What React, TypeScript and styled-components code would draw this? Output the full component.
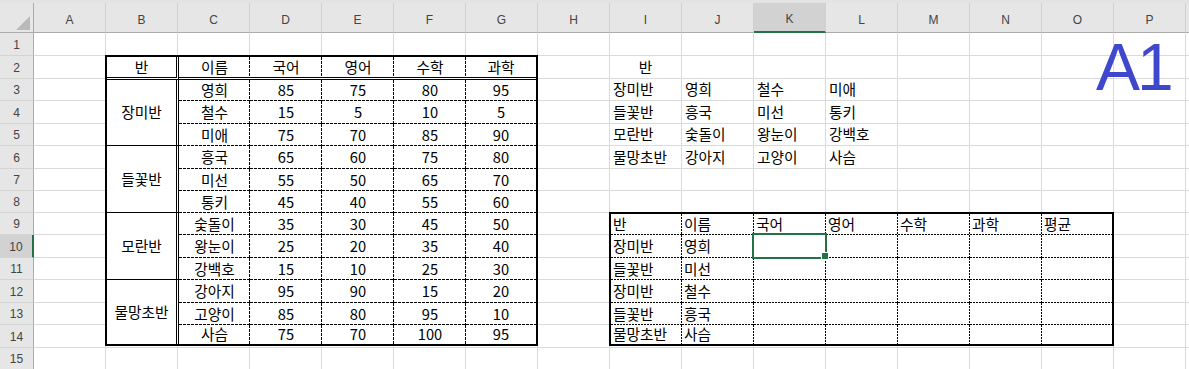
import styled, { createGlobalStyle } from "styled-components";

const GlobalStyle = createGlobalStyle`
  html, body {
    margin: 0;
    padding: 0;
    background: #fff;
  }
  body {
    overflow: hidden;
  }
  * {
    box-sizing: border-box;
  }
`;

const ROW_HEIGHTS = [23, 23, 22, 23, 22, 23, 22, 22, 22, 23, 22, 23, 22, 23, 22];
// Q only peeks in at the right edge, so its header stays blank
const COLUMNS = "ABCDEFGHIJKLMNOPQ".split("");
const VISIBLE_LETTERS = 16;
const ACTIVE_COL = "K";
const ACTIVE_ROW = 10;

const CELL_FONT = `"Noto Sans CJK KR", "Noto Sans", sans-serif`;
const HEAD_FONT = `"Liberation Sans", Arial, sans-serif`;

type Edge = "none" | "solid" | "double" | "dashed" | "dotted";
type Align = "left" | "center";

const DASH: Record<string, string> = {
  dashed: "#000 0 3px, transparent 3px 4px",
  dotted: "#000 0 2px, transparent 2px 3px",
};

function edgeBorder(side: "right" | "bottom", e: Edge) {
  if (e === "solid") return `border-${side}: 1px solid #000;`;
  if (e === "double") return `border-${side}: 3px double #000;`;
  return "";
}

function edgeBackground(r: Edge, b: Edge) {
  const layers: string[] = [];
  if (r === "dashed" || r === "dotted") {
    layers.push(`repeating-linear-gradient(to bottom, ${DASH[r]}) right top / 1px 100% no-repeat`);
  }
  if (b === "dashed" || b === "dotted") {
    layers.push(`repeating-linear-gradient(to right, ${DASH[b]}) left bottom / 100% 1px no-repeat`);
  }
  return layers.length ? `background: ${layers.join(", ")};` : "";
}

const Window = styled.div`
  position: relative;
  width: 1189px;
  height: 369px;
  overflow: hidden;
  background: #fff;
`;

const FormulaEdge = styled.div`
  height: 3px;
  background: #e3e3e3;
`;

const Sheet = styled.div`
  display: grid;
  grid-template-columns: 34px repeat(${COLUMNS.length}, 72px);
  grid-template-rows: 30px ${ROW_HEIGHTS.map((h) => `${h}px`).join(" ")};
  font-family: ${CELL_FONT};
`;

type Place = { $row: number; $col: number };

const Corner = styled.div`
  grid-area: 1 / 1;
  background: #e6e6e6;
  border-right: 1px solid #ababab;
  border-bottom: 1px solid #ababab;
  display: flex;
  align-items: flex-end;
  justify-content: flex-end;
  padding: 0 3px 2px 0;
`;

const ColHead = styled.div<{ $col: number; $active?: boolean }>`
  grid-area: 1 / ${(p) => p.$col};
  background: ${(p) => (p.$active ? "#d2d2d2" : "#e6e6e6")};
  border-right: 1px solid #d0d0d0;
  border-bottom: ${(p) => (p.$active ? "2px solid #217346" : "1px solid #ababab")};
  display: flex;
  align-items: center;
  justify-content: center;
  padding-top: 4px;
  font-family: ${HEAD_FONT};
  font-size: 12px;
  color: #444;
`;

const RowHead = styled.div<{ $row: number; $active?: boolean }>`
  grid-area: ${(p) => p.$row} / 1;
  background: ${(p) => (p.$active ? "#d2d2d2" : "#e6e6e6")};
  border-bottom: 1px solid #d4d4d4;
  border-right: ${(p) => (p.$active ? "2px solid #217346" : "1px solid #ababab")};
  display: flex;
  align-items: center;
  justify-content: center;
  padding-top: 1px;
  font-family: ${HEAD_FONT};
  font-size: 12px;
  color: #444;
`;

const Cell = styled.div<Place & { $align?: Align }>`
  grid-area: ${(p) => p.$row} / ${(p) => p.$col};
  border-right: 1px solid #dadada;
  border-bottom: 1px solid #dadada;
  display: flex;
  align-items: center;
  justify-content: ${(p) => (p.$align === "center" ? "center" : "flex-start")};
  padding-left: ${(p) => (p.$align === "center" ? "0" : "3px")};
  font-size: 14.7px;
  line-height: 1;
  color: #000;
  white-space: nowrap;
`;

const TableFrame = styled.div<{ $area: string; $cols: string; $rows: string }>`
  grid-area: ${(p) => p.$area};
  margin: -1px 0 2px -1px;
  border: 2px solid #000;
  background: #fff;
  display: grid;
  grid-template-columns: ${(p) => p.$cols};
  grid-template-rows: ${(p) => p.$rows};
  z-index: 1;
`;

const TCell = styled.div<{ $r: Edge; $b: Edge; $align?: Align; $span?: number }>`
  ${(p) => edgeBorder("right", p.$r)}
  ${(p) => edgeBorder("bottom", p.$b)}
  ${(p) => edgeBackground(p.$r, p.$b)}
  grid-row: span ${(p) => p.$span ?? 1};
  display: flex;
  align-items: center;
  justify-content: ${(p) => (p.$align === "left" ? "flex-start" : "center")};
  padding-left: ${(p) => (p.$align === "left" ? "2px" : "0")};
  font-size: 14.7px;
  line-height: 1;
  color: #000;
  white-space: nowrap;
`;

const Selection = styled.div`
  grid-area: ${ACTIVE_ROW + 1} / ${COLUMNS.indexOf(ACTIVE_COL) + 2};
  margin: -2px -1px -1px -2px;
  border: 2px solid #217346;
  position: relative;
  z-index: 2;

  &::after {
    content: "";
    position: absolute;
    right: -3px;
    bottom: -2px;
    width: 6px;
    height: 6px;
    background: #217346;
    outline: 1px solid #fff;
  }
`;

const BigLabel = styled.div`
  position: absolute;
  left: 1096px;
  top: 34px;
  font-family: ${HEAD_FONT};
  font-size: 66px;
  line-height: 1;
  letter-spacing: -3px;
  color: #3f48cc;
  z-index: 3;
`;

const SUBJECTS = ["국어", "영어", "수학", "과학"];

const GROUPS: { name: string; students: [string, number, number, number, number][] }[] = [
  { name: "장미반", students: [["영희", 85, 75, 80, 95], ["철수", 15, 5, 10, 5], ["미애", 75, 70, 85, 90]] },
  { name: "들꽃반", students: [["흥국", 65, 60, 75, 80], ["미선", 55, 50, 65, 70], ["통키", 45, 40, 55, 60]] },
  { name: "모란반", students: [["숯돌이", 35, 30, 45, 50], ["왕눈이", 25, 20, 35, 40], ["강백호", 15, 10, 25, 30]] },
  { name: "물망초반", students: [["강아지", 95, 90, 15, 20], ["고양이", 85, 80, 95, 10], ["사슴", 75, 70, 100, 95]] },
];

const LOOKUP_ROWS = [
  ["장미반", "영희"],
  ["들꽃반", "미선"],
  ["장미반", "철수"],
  ["들꽃반", "흥국"],
  ["물망초반", "사슴"],
];

// loose values typed straight into the sheet (I2:L6)
const LOOSE: Record<string, { text: string; align?: Align }> = {
  I2: { text: "반", align: "center" },
};
GROUPS.forEach((g, i) => {
  const row = i + 3;
  LOOSE[`I${row}`] = { text: g.name };
  g.students.forEach((s, j) => {
    LOOSE[`${"JKL"[j]}${row}`] = { text: s[0] };
  });
});

function ScoreTable() {
  const header = ["반", "이름", ...SUBJECTS];
  return (
    <TableFrame
      $area="3 / 3 / 16 / 9"
      $cols="72px 71px 72px 72px 72px 70px"
      $rows="23px 21px 23px 22px 23px 22px 22px 22px 23px 22px 23px 22px 19px"
    >
      {header.map((h, i) => (
        <TCell key={h} $b="double" $r={i === 0 ? "double" : i === header.length - 1 ? "none" : "dashed"}>
          {h}
        </TCell>
      ))}
      {GROUPS.map((g, gi) => {
        const lastGroup = gi === GROUPS.length - 1;
        return [
          <TCell key={g.name} $span={3} $r="double" $b={lastGroup ? "none" : "solid"}>
            {g.name}
          </TCell>,
          ...g.students.flatMap((s, si) => {
            const lastRow = lastGroup && si === g.students.length - 1;
            return s.map((v, ci) => (
              <TCell
                key={`${g.name}-${si}-${ci}`}
                $r={ci === s.length - 1 ? "none" : "dashed"}
                $b={lastRow ? "none" : "dashed"}
              >
                {v}
              </TCell>
            ));
          }),
        ];
      })}
    </TableFrame>
  );
}

function LookupTable() {
  const header = ["반", "이름", ...SUBJECTS, "평균"];
  const rows = [header, ...LOOKUP_ROWS.map((r) => [...r, "", "", "", "", ""])];
  return (
    <TableFrame
      $area="10 / 10 / 16 / 17"
      $cols="71px 72px 72px 72px 72px 72px 70px"
      $rows="21px 23px 22px 23px 22px 19px"
    >
      {rows.map((r, ri) =>
        r.map((v, ci) => (
          <TCell
            key={`${ri}-${ci}`}
            $align="left"
            $r={ci === r.length - 1 ? "none" : "dotted"}
            $b={ri === rows.length - 1 ? "none" : "dotted"}
          >
            {v}
          </TCell>
        ))
      )}
    </TableFrame>
  );
}

export default function App() {
  return (
    <Window>
      <GlobalStyle />
      <FormulaEdge />
      <Sheet>
        <Corner>
          <svg width="14" height="14" viewBox="0 0 14 14">
            <polygon points="14,0 14,14 0,14" fill="#b9b9b9" />
          </svg>
        </Corner>
        {COLUMNS.map((c, ci) => (
          <ColHead key={c} $col={ci + 2} $active={c === ACTIVE_COL}>
            {ci < VISIBLE_LETTERS ? c : ""}
          </ColHead>
        ))}
        {ROW_HEIGHTS.map((_, i) => {
          const row = i + 1;
          return [
            <RowHead key={`h${row}`} $row={row + 1} $active={row === ACTIVE_ROW}>
              {row}
            </RowHead>,
            ...COLUMNS.map((c, ci) => {
              const v = LOOSE[`${c}${row}`];
              return (
                <Cell key={`${c}${row}`} $row={row + 1} $col={ci + 2} $align={v?.align}>
                  {v?.text}
                </Cell>
              );
            }),
          ];
        })}
        <ScoreTable />
        <LookupTable />
        <Selection />
      </Sheet>
      <BigLabel>A1</BigLabel>
    </Window>
  );
}
